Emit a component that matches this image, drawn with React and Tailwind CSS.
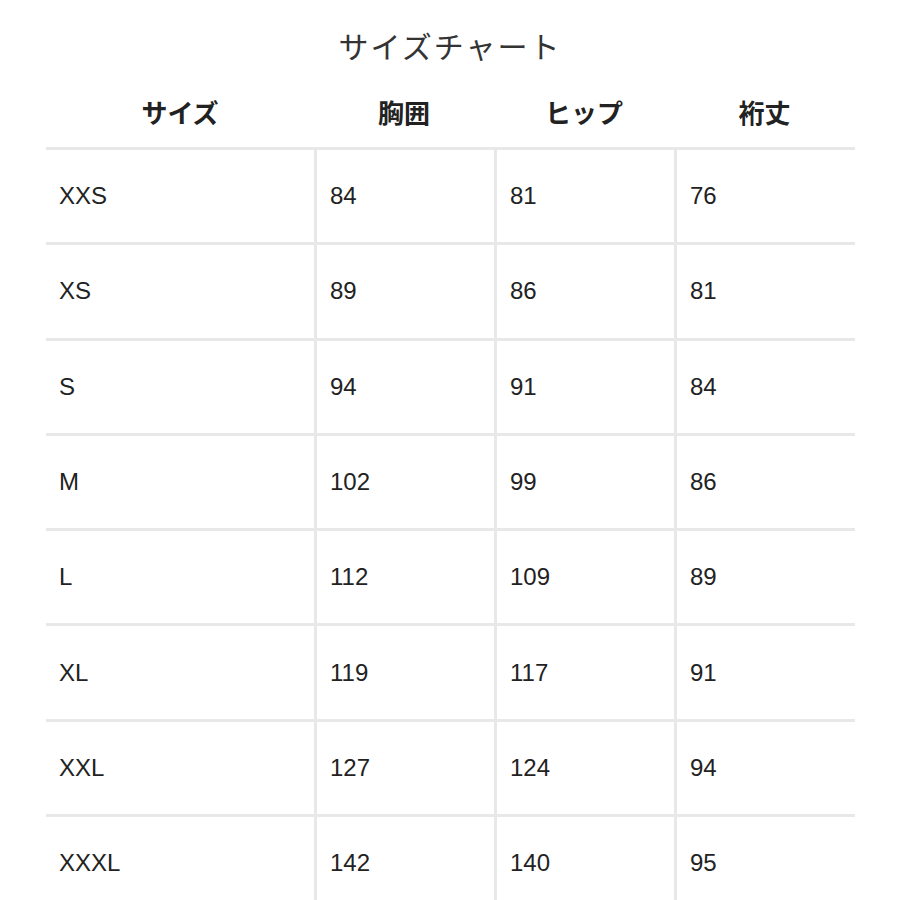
const rows = [
  ['XXS', '84', '81', '76'],
  ['XS', '89', '86', '81'],
  ['S', '94', '91', '84'],
  ['M', '102', '99', '86'],
  ['L', '112', '109', '89'],
  ['XL', '119', '117', '91'],
  ['XXL', '127', '124', '94'],
  ['XXXL', '142', '140', '95'],
];

const headers = ['サイズ', '胸囲', 'ヒップ', '裄丈'];

export default function App() {
  return (
    <div className="bg-white w-[900px] h-[900px] overflow-hidden text-[#222] font-['Liberation_Sans','Noto_Sans_CJK_JP',sans-serif]">
      <h1 className="pt-[24px] h-[80px] text-center text-[30px] leading-[42px] tracking-[2px] text-[#333] font-['Noto_Sans_CJK_JP',sans-serif] font-normal">
        サイズチャート
      </h1>
      <div className="ml-[46px] grid grid-cols-[268px_180px_180px_181px]">
        {headers.map((h) => (
          <div key={h} className="h-[67px] flex items-center justify-center pb-[4px] text-[26px] font-bold font-['Noto_Sans_CJK_JP',sans-serif]">
            {h}
          </div>
        ))}
        {rows.map((r) =>
          r.map((c, i) => (
            <div
              key={r[0] + i}
              className={
                'h-[95.3px] border-t-[3px] border-[#e8e8e8] flex items-center pl-[13px] text-[24px] ' +
                (i > 0 ? 'border-l-[3px]' : '')
              }
            >
              {c}
            </div>
          ))
        )}
      </div>
    </div>
  );
}
